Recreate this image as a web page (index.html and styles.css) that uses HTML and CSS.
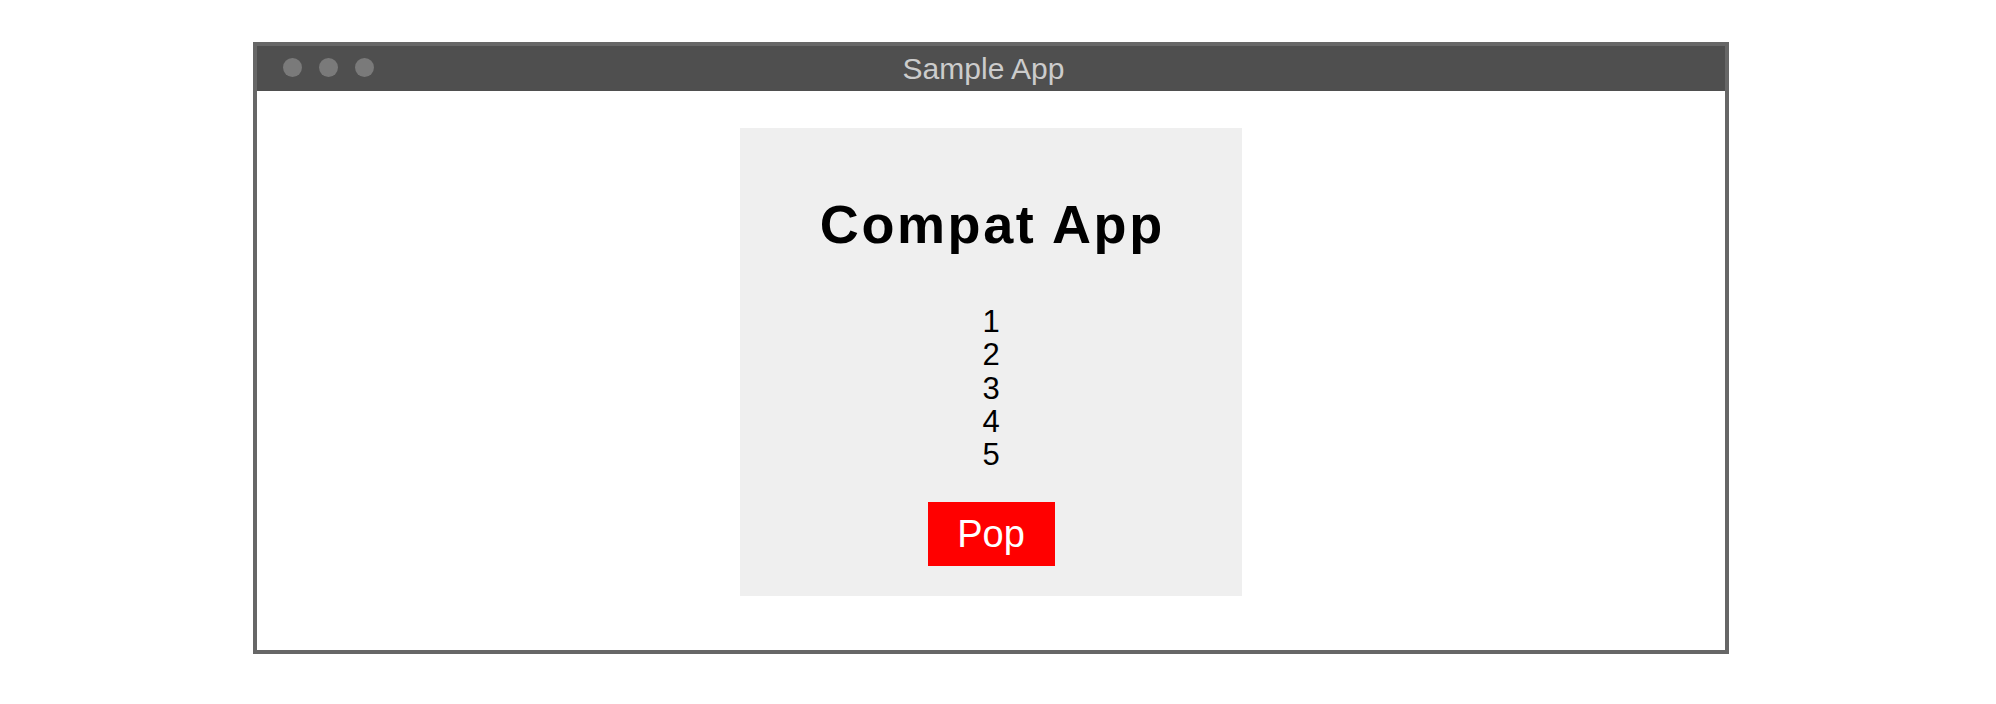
FILE: index.html
```html
<!DOCTYPE html>
<html>
<head>
<meta charset="utf-8">
<link rel="stylesheet" href="styles.css">
</head>
<body>
<div class="window">
  <div class="titlebar">
    <div class="dots">
      <span class="dot"></span>
      <span class="dot"></span>
      <span class="dot"></span>
    </div>
    <div class="wtitle">Sample App</div>
  </div>
  <div class="content">
    <div class="card">
      <h1 class="heading">Compat App</h1>
      <ul class="list">
        <li>1</li>
        <li>2</li>
        <li>3</li>
        <li>4</li>
        <li>5</li>
      </ul>
      <button class="pop">Pop</button>
    </div>
  </div>
</div>
</body>
</html>
```

FILE: styles.css
```css
html, body {
  margin: 0;
  padding: 0;
  background: #ffffff;
}
body {
  font-family: "Liberation Sans", Arial, sans-serif;
  padding: 42px 0 0 253px;
}
.window {
  width: 1468px;
  height: 604px;
  border: 4px solid #676767;
  display: flex;
  flex-direction: column;
  background: #ffffff;
}
.titlebar {
  position: relative;
  height: 45px;
  background: #4f4f4f;
  display: flex;
  align-items: center;
  justify-content: center;
  flex: none;
}
.dots {
  position: absolute;
  left: 26px;
  top: 12px;
  display: flex;
  gap: 17px;
}
.dot {
  width: 19px;
  height: 19px;
  border-radius: 50%;
  background: #7a7a7a;
}
.wtitle {
  color: #cccccc;
  font-size: 30px;
  padding-right: 15px;
  line-height: 45px;
}
.content {
  flex: 1;
  display: flex;
  justify-content: center;
  padding-top: 37px;
}
.card {
  width: 502px;
  height: 468px;
  box-sizing: border-box;
  background: #efefef;
  display: flex;
  flex-direction: column;
  align-items: center;
  padding-top: 66px;
}
.heading {
  margin: 0 0 0 2.6px;
  font-size: 54px;
  font-weight: bold;
  line-height: 61px;
  color: #000000;
  letter-spacing: 2.6px;
}
.list {
  list-style: none;
  margin: 50px 0 0 0;
  padding: 0;
  font-size: 31px;
  line-height: 33.3px;
  text-align: center;
  color: #000000;
}
.pop {
  margin-top: 31px;
  width: 127px;
  height: 64px;
  border: none;
  background: #ff0000;
  color: #ffffff;
  font-family: "Liberation Sans", Arial, sans-serif;
  font-size: 38px;
  line-height: 64px;
  padding: 0;
}
```
